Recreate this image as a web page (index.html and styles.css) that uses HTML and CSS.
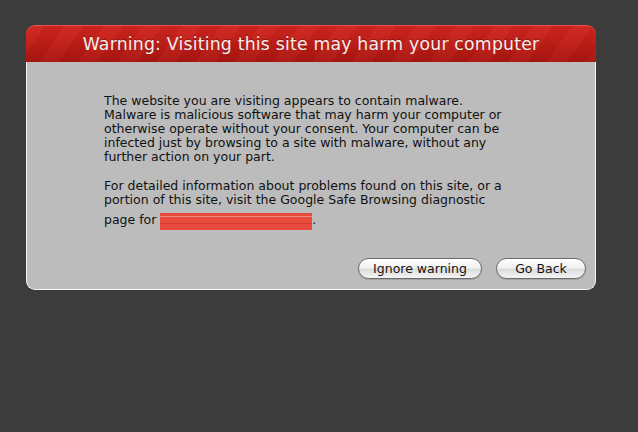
FILE: index.html
```html
<!DOCTYPE html>
<html>
<head>
<meta charset="utf-8">
<link rel="stylesheet" href="styles.css">
</head>
<body>
<div class="dialog">
  <div class="header">Warning: Visiting this site may harm your computer</div>
  <div class="body">
    <p class="para">The website you are visiting appears to contain malware.<br>Malware is malicious software that may harm your computer or<br>otherwise operate without your consent. Your computer can be<br>infected just by browsing to a site with malware, without any<br>further action on your part.</p>
    <p class="para second">For detailed information about problems found on this site, or a<br>portion of this site, visit the Google Safe Browsing diagnostic<span class="last">page for <span class="redact"></span>.</span></p>
    <div class="actions">
      <button class="btn ignore">Ignore warning</button>
      <button class="btn back">Go Back</button>
    </div>
  </div>
</div>
</body>
</html>
```
FILE: styles.css
```css
html, body {
  margin: 0;
  padding: 0;
  background: #3c3c3c;
  width: 638px;
  height: 432px;
  overflow: hidden;
}
body {
  padding: 25px 0 0 26px;
  box-sizing: border-box;
  font-family: "DejaVu Sans", "Liberation Sans", sans-serif;
}
.dialog {
  width: 570px;
}
.header {
  height: 37px;
  border-radius: 9px 9px 0 0;
  background:
    repeating-linear-gradient(125deg, rgba(255,255,255,0.025) 0 16px, rgba(0,0,0,0.035) 16px 32px),
    linear-gradient(#d2261f 0%, #c21e18 45%, #a9160f 100%);
  color: #f6eeee;
  font-size: 17.3px;
  line-height: 38px;
  text-align: center;
  letter-spacing: 0.2px;
  text-shadow: 0 -1px 0 rgba(0,0,0,0.3);
  box-shadow: inset 0 1px 0 rgba(255,140,130,0.45);
}
.body {
  background: #bcbcbc;
  border: 1px solid #f4f4f4;
  border-top: none;
  border-radius: 0 0 9px 9px;
  padding: 32px 9px 10px 77px;
  height: 228px;
  box-sizing: border-box;
  display: flex;
  flex-direction: column;
}
.para {
  margin: 0;
  font-size: 12.5px;
  line-height: 14px;
  color: #111;
  white-space: nowrap;
}
.second {
  margin-top: 15px;
}
.last {
  display: block;
  margin-top: 6px;
}
.redact {
  display: inline-block;
  width: 152px;
  height: 17px;
  vertical-align: -6px;
  background: linear-gradient(#e64a3d 0 3px, #f08a80 3px 4px, #e84b3e 4px 10px, #d83c30 10px 11px, #e84b3e 11px 100%);
}
.actions {
  margin-top: auto;
  display: flex;
  justify-content: flex-end;
  gap: 14px;
}
.btn {
  height: 21px;
  border-radius: 11px;
  border: 1px solid #6a6a6a;
  background: linear-gradient(#ffffff 0%, #f2f2f2 45%, #dcdcdc 55%, #f4f4f4 100%);
  font-family: "DejaVu Sans", "Liberation Sans", sans-serif;
  font-size: 12.5px;
  color: #111;
  padding: 0;
  box-shadow: 0 1px 1px rgba(0,0,0,0.15);
}
.ignore { width: 124px; }
.back { width: 90px; }
```
